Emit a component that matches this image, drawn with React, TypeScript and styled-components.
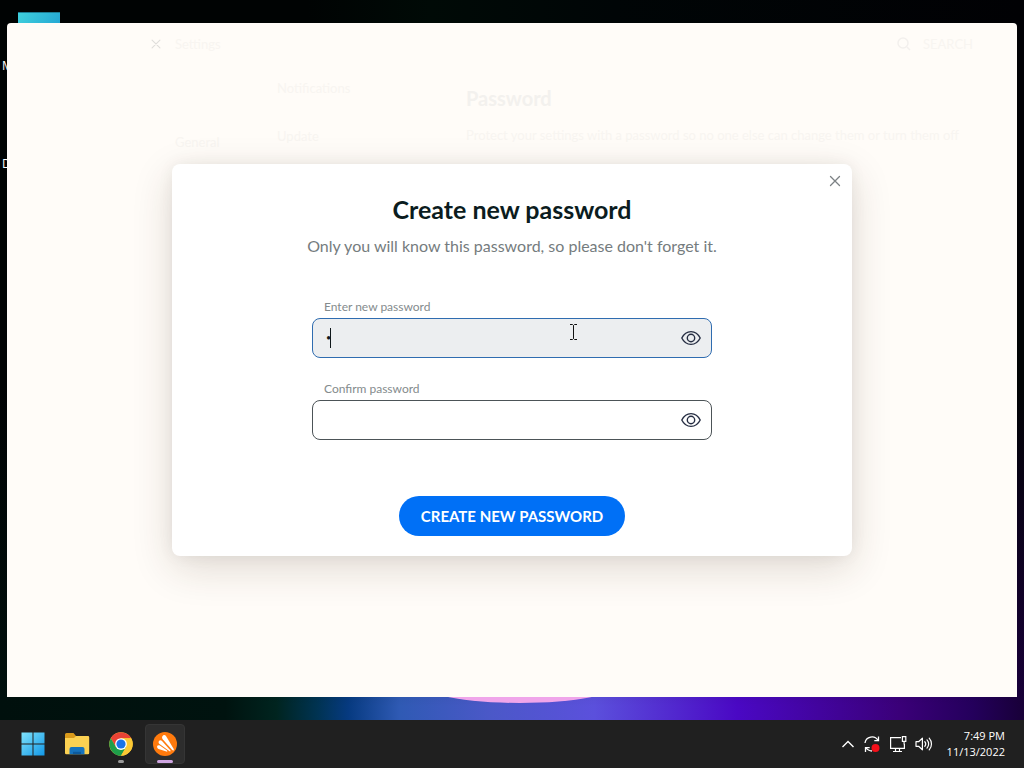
import React, { useState } from 'react';
import styled, { createGlobalStyle } from 'styled-components';

const Global = createGlobalStyle`
  *, *::before, *::after { box-sizing: border-box; }
  body { margin: 0; background: #010304; font-family: Lato, "Liberation Sans", sans-serif; }
  button { font: inherit; padding: 0; border: 0; background: none; color: inherit; cursor: pointer; }
`;

const Screen = styled.div`
  position: relative;
  display: flex;
  flex-direction: column;
  min-height: 100vh;
  overflow: hidden;
  background:
    linear-gradient(to right, #000303 0%, #000303 30%, #000a06 42%, #000506 60%, #010104 100%) top / 100% 300px no-repeat,
    linear-gradient(to bottom, #010304 0%, #010304 50%, transparent 92%),
    linear-gradient(to right, #00100d 0%, #00130f 22%, #00241f 27%, #003352 31%, #063a80 34%, #2f5ab4 39%, #4b58c8 48%, #5b50dc 58%, #4a08c4 72%, #3a0078 88%, #24005c 95%, #180038 100%);
`;

const Petal = styled.div`
  position: absolute;
  left: 50%;
  bottom: 65px;
  width: 200px;
  height: 40px;
  margin-left: -92px;
  border-radius: 50%;
  background: #f0a5ea;
`;

const DesktopIcon = styled.div`
  position: absolute;
  top: 12px;
  left: 18px;
  width: 42px;
  height: 30px;
  background: linear-gradient(120deg, #3fd0dc, #1f9fd2);
  border-top: 1px solid #1c7d94;
`;

const DesktopLabel = styled.span<{ $top: number }>`
  position: absolute;
  top: ${p => p.$top}px;
  left: 2px;
  font: 12px/16px "Open Sans", sans-serif;
  color: #fff;
`;

const Window = styled.main`
  position: relative;
  flex: 1;
  display: flex;
  flex-direction: column;
  align-items: center;
  margin: 23px 7px;
  padding: 141px 24px;
  border-radius: 4px 4px 0 0;
  background: #fffcf8;
`;

const Backdrop = styled.div`
  position: absolute;
  inset: 0;
  padding: 12px 44px 0 142px;
  color: #f8f5f1;
  font-size: 13px;
  line-height: 18px;
`;

const BackdropBar = styled.div`
  display: flex;
  justify-content: space-between;
`;

const BackdropGroup = styled.div`
  display: flex;
  align-items: center;
  gap: 12px;
`;

const BackdropColumns = styled.div`
  display: grid;
  grid-template-columns: 102px 189px 1fr;
  padding: 26px 0 0 26px;
`;

const BackdropNav = styled.div<{ $top: number }>`
  display: flex;
  flex-direction: column;
  gap: 30px;
  padding-top: ${p => p.$top}px;
`;

const BackdropTitle = styled.div`
  padding-top: 4px;
  font-size: 20px;
  line-height: 30px;
  font-weight: 700;
  color: #f3f1ee;
`;

const BackdropText = styled.div`
  padding-top: 12px;
  line-height: 20px;
`;

const Dialog = styled.section`
  position: relative;
  width: 100%;
  max-width: 680px;
  display: flex;
  flex-direction: column;
  align-items: center;
  padding: 30px 24px 20px;
  border-radius: 8px;
  background: #fff;
  box-shadow: 0 12px 40px rgba(60, 35, 20, 0.16), 0 0 16px rgba(40, 30, 20, 0.06);
`;

const CloseButton = styled.button`
  position: absolute;
  top: 9px;
  right: 9px;
  width: 16px;
  height: 16px;
  svg { display: block; }
`;

const Title = styled.h1`
  margin: 0;
  font-size: 25px;
  line-height: 30px;
  font-weight: 700;
  color: #0b1c20;
`;

const Subtitle = styled.p`
  margin: 12px 0 42px;
  font-size: 16px;
  line-height: 20px;
  color: #757c7e;
`;

const Form = styled.form`
  width: 100%;
  max-width: 400px;
  display: flex;
  flex-direction: column;
  align-items: center;
`;

const Field = styled.div`
  width: 100%;
  margin-bottom: 22px;
`;

const Label = styled.label`
  display: block;
  padding: 0 0 2px 12px;
  font-size: 12px;
  line-height: 18px;
  color: #848b8d;
`;

const InputRow = styled.div<{ $active?: boolean }>`
  display: flex;
  align-items: center;
  height: 40px;
  padding: 0 10px 0 12px;
  border: 1px solid ${p => (p.$active ? '#2f6cb0' : '#4c5357')};
  border-radius: 8px;
  background: ${p => (p.$active ? '#eceef0' : '#fff')};
`;

const Entry = styled.div`
  position: relative;
  flex: 1;
  display: flex;
`;

const Input = styled.input`
  width: 100%;
  height: 20px;
  padding: 0 0 0 1px;
  border: 0;
  outline: 0;
  background: none;
  font-size: 16px;
  line-height: 20px;
  font-family: inherit;
  color: #10181b;

  &[type='password'] { font-size: 9px; }
`;

const Caret = styled.span`
  position: absolute;
  left: 5px;
  top: 0;
  width: 1px;
  height: 20px;
  background: #10181b;
`;

const Pointer = styled.svg`
  position: absolute;
  left: 244px;
  top: -5px;
`;

const EyeButton = styled.button`
  width: 20px;
  height: 20px;
  svg { display: block; }
`;

const Submit = styled.button`
  height: 40px;
  margin-top: 34px;
  padding: 0 22px 1px;
  border-radius: 20px;
  background: #0070f6;
  color: #fff;
  font-size: 15px;
  line-height: 20px;
  font-weight: 700;
  white-space: nowrap;
`;

const Taskbar = styled.footer`
  position: relative;
  display: flex;
  align-items: center;
  justify-content: space-between;
  height: 48px;
  padding: 0 19px 0 13px;
  background: #202020;
`;

const Apps = styled.nav`
  display: flex;
  gap: 4px;
`;

const AppButton = styled.button<{ $open?: boolean }>`
  position: relative;
  display: grid;
  place-items: center;
  width: 40px;
  height: 40px;
  border-radius: 4px;
  background: ${p => (p.$open ? '#2d2d2d' : 'transparent')};
  border: 1px solid ${p => (p.$open ? '#353535' : 'transparent')};
`;

const Indicator = styled.span<{ $wide?: boolean }>`
  position: absolute;
  left: 50%;
  bottom: 0;
  width: ${p => (p.$wide ? 16 : 6)}px;
  height: 3px;
  transform: translateX(-50%);
  border-radius: 2px;
  background: ${p => (p.$wide ? '#cfa6e2' : '#9a9a9a')};
`;

const Tray = styled.div`
  display: flex;
  align-items: center;
  gap: 8px;
  svg { display: block; }
`;

const Clock = styled.time`
  margin-left: 6px;
  font: 11px/16px "Open Sans", sans-serif;
  color: #fff;
  text-align: right;
  white-space: pre-line;
`;

const Cross = ({ size, color }: { size: number; color: string }) => (
  <svg width={size} height={size} viewBox="0 0 16 16" fill="none" stroke={color} strokeWidth="1.3" strokeLinecap="round">
    <path d="M3.5 3.5l9 9M12.5 3.5l-9 9" />
  </svg>
);

const Eye = () => (
  <svg width="20" height="20" viewBox="0 0 20 20" fill="none" stroke="#252d42" strokeWidth="1.4">
    <path d="M.8 10C3 5.600 6 3.600 10 3.600S17 5.600 19.200 10C17 14.400 14 16.400 10 16.400S3 14.400 .8 10Z" strokeLinejoin="round" />
    <circle cx="10" cy="10" r="3.700" />
  </svg>
);

const WindowsLogo = () => (
  <svg width="24" height="24" viewBox="0 0 24 24">
    <defs>
      <linearGradient id="win" x1="0" y1="0" x2="1" y2="1">
        <stop offset="0" stopColor="#7fe3fb" /><stop offset="1" stopColor="#1298e8" />
      </linearGradient>
    </defs>
    <path fill="url(#win)" d="M.5 .5h11v11h-11zM12.500 .5h11v11h-11zM.5 12.500h11v11h-11zM12.500 12.500h11v11h-11z" />
  </svg>
);

const FolderLogo = () => (
  <svg width="26" height="24" viewBox="0 0 26 24">
    <path fill="#d99a1b" d="M1 2.500a1.500 1.500 0 0 1 1.500-1.500h7L12 4v4H1z" />
    <path fill="#fbd152" d="M1 6h9l2-2h12a1.200 1.200 0 0 1 1.200 1.200V21a1.200 1.200 0 0 1-1.200 1.200H2.200A1.200 1.200 0 0 1 1 21z" />
    <path fill="#1673bd" d="M5.500 22.200V17a2 2 0 0 1 2-2h11a2 2 0 0 1 2 2v5.200z" />
    <path fill="#0d5a9c" d="M9 22.200v-2.400h8v2.400z" />
  </svg>
);

const ChromeLogo = () => (
  <svg width="24" height="24" viewBox="0 0 48 48">
    <circle cx="24" cy="24" r="23.500" fill="#fcc934" />
    <path fill="#ea4335" d="M3.650 12.250A23.500 23.500 0 0 1 44.350 12.250L24 12.250 13.820 29.880Z" />
    <path fill="#1e9e4a" d="M3.650 12.250A23.500 23.500 0 0 0 24 47.500L34.180 29.880 13.820 29.880Z" />
    <path fill="#fcc934" d="M44.350 12.250A23.500 23.500 0 0 1 24 47.500L34.180 29.880 24 12.250Z" />
    <circle cx="24" cy="24" r="11.750" fill="#fff" />
    <circle cx="24" cy="24" r="9.200" fill="#1a73e8" />
  </svg>
);

const AvastLogo = () => (
  <svg width="24" height="24" viewBox="0 0 24 24">
    <circle cx="12" cy="12" r="12" fill="#ff7a0d" />
    <path fill="#fff" d="M9.400 4.200C10.200 2.900 12 2.700 13 4L20.700 17C21.300 18.600 20 18.900 19.200 18L9.700 7.200C8.900 6.200 8.900 5.100 9.400 4.200Z" />
    <path fill="#fff" d="M5.800 9.200C6.500 8 8 7.900 9 8.900L17.300 18.200C18 19.400 17.100 19.700 16.200 19.100L6.600 12C5.600 11.200 5.300 10.100 5.800 9.200Z" />
    <path fill="#fff" d="M4.200 14.100C4.600 13 5.900 12.900 6.900 13.500L14 18.500C14.800 19.300 14.200 19.800 13.400 19.600L5.600 17C4.400 16.500 3.800 15.300 4.200 14.100Z" />
  </svg>
);

const Chevron = () => (
  <svg width="14" height="16" viewBox="0 0 14 16" fill="none" stroke="#fff" strokeWidth="1.400">
    <path d="M1.500 11L7 5.500l5.500 5.500" />
  </svg>
);

const Sync = () => (
  <svg width="18" height="18" viewBox="0 0 18 18" fill="none" stroke="#fff" strokeWidth="1.300">
    <path d="M2 8A7 7 0 0 1 15 5.500M15.500 1.500v4.200h-4.200M9 16a7 7 0 0 1-6-3.500M2.500 17v-4.400h4.200" />
    <circle cx="12.500" cy="13" r="4" fill="#f5101a" stroke="none" />
  </svg>
);

const Network = () => (
  <svg width="18" height="18" viewBox="0 0 18 18" fill="none" stroke="#fff" strokeWidth="1.200">
    <path d="M12 2.600H1.600v10.800h13.800V9M6.500 13.400v3M10.500 13.400v3M4 16.500h9M13.400 1.600h3.400v4.800h-3.400zM15.100 6.400v3.200" />
  </svg>
);

const Volume = () => (
  <svg width="18" height="18" viewBox="0 0 18 18" fill="none" stroke="#fff" strokeWidth="1.200" strokeLinejoin="round" strokeLinecap="round">
    <path d="M1 6.700h2.600L7.400 3.200v11.600L3.600 11.300H1zM9.800 6.700a3.600 3.600 0 0 1 0 4.600M12 4.900a6 6 0 0 1 0 8.200M14.200 3.100a8.800 8.800 0 0 1 0 11.800" />
  </svg>
);

interface PasswordFieldProps {
  id: string;
  label: string;
  initial?: string;
  active?: boolean;
}

const PasswordField = ({ id, label, initial = '', active }: PasswordFieldProps) => {
  const [value, setValue] = useState(initial);
  const [shown, setShown] = useState(false);
  return (
    <Field>
      <Label htmlFor={id}>{label}</Label>
      <InputRow $active={active}>
        <Entry>
          <Input id={id} type={shown ? 'text' : 'password'} value={value} onChange={e => setValue(e.target.value)} />
          {active && <Caret />}
          {active && (
            <Pointer width="9" height="18" viewBox="0 0 9 18" fill="none" stroke="#111">
              <path d="M1 1.500h2.500l1 1 1-1H8M4.500 2.500v13M1 16.500h2.500l1-1 1 1H8" />
            </Pointer>
          )}
        </Entry>
        <EyeButton type="button" aria-label="Show password" onClick={() => setShown(!shown)}><Eye /></EyeButton>
      </InputRow>
    </Field>
  );
};

export default function App() {
  return (
    <Screen>
      <Global />
      <DesktopIcon />
      <DesktopLabel $top={58}>M</DesktopLabel>
      <DesktopLabel $top={156}>D</DesktopLabel>
      <Petal />
      <Window>
        <Backdrop aria-hidden="true">
          <BackdropBar>
            <BackdropGroup><Cross size={14} color="#e0dedb" />Settings</BackdropGroup>
            <BackdropGroup>
              <svg width="14" height="14" viewBox="0 0 14 14" fill="none" stroke="#f3f0ed" strokeWidth="1.500">
                <circle cx="6" cy="6" r="5" /><path d="M10 10l3 3" />
              </svg>
              SEARCH
            </BackdropGroup>
          </BackdropBar>
          <BackdropColumns>
            <BackdropNav $top={54}><span>General</span></BackdropNav>
            <BackdropNav $top={0}><span>Notifications</span><span>Update</span></BackdropNav>
            <div>
              <BackdropTitle>Password</BackdropTitle>
              <BackdropText>Protect your settings with a password so no one else can change them or turn them off</BackdropText>
            </div>
          </BackdropColumns>
        </Backdrop>
        <Dialog role="dialog" aria-labelledby="dialog-title">
          <CloseButton aria-label="Close"><Cross size={16} color="#7c8184" /></CloseButton>
          <Title id="dialog-title">Create new password</Title>
          <Subtitle>Only you will know this password, so please don't forget it.</Subtitle>
          <Form onSubmit={e => e.preventDefault()}>
            <PasswordField id="new-password" label="Enter new password" initial="a" active />
            <PasswordField id="confirm-password" label="Confirm password" />
            <Submit type="submit">CREATE NEW PASSWORD</Submit>
          </Form>
        </Dialog>
      </Window>
      <Taskbar>
        <Apps>
          <AppButton aria-label="Start"><WindowsLogo /></AppButton>
          <AppButton aria-label="File Explorer"><FolderLogo /></AppButton>
          <AppButton aria-label="Chrome"><ChromeLogo /><Indicator /></AppButton>
          <AppButton aria-label="Avast" $open><AvastLogo /><Indicator $wide /></AppButton>
        </Apps>
        <Tray>
          <Chevron />
          <Sync />
          <Network />
          <Volume />
          <Clock>{'7:49 PM\n11/13/2022'}</Clock>
        </Tray>
      </Taskbar>
    </Screen>
  );
}
